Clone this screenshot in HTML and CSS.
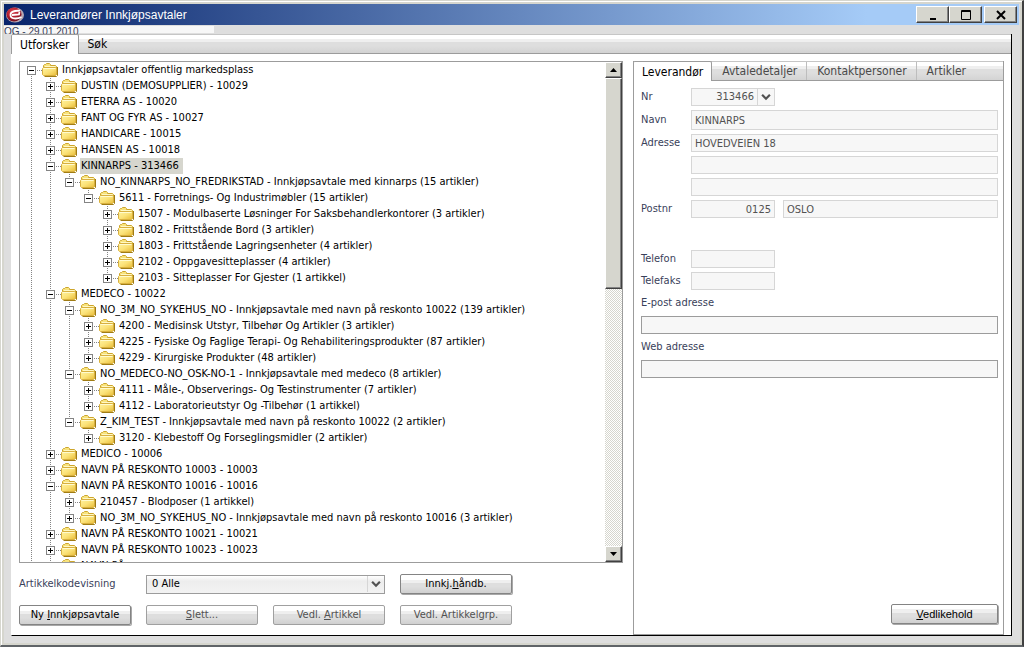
FILE: index.html
```
<!DOCTYPE html>
<html lang="no">
<head>
<meta charset="utf-8">
<title>Leverandører Innkjøpsavtaler</title>
<link rel="stylesheet" href="styles.css">
</head>
<body>
<svg class="defs" aria-hidden="true">
  <defs>
    <linearGradient id="gold" x1="0" y1="0" x2="1" y2="1">
      <stop offset="0" stop-color="#fff3a0"/><stop offset=".5" stop-color="#fbe278"/><stop offset="1" stop-color="#e8bc38"/>
    </linearGradient>
    <radialGradient id="ball" cx=".4" cy=".3" r=".7">
      <stop offset="0" stop-color="#d84450"/><stop offset=".6" stop-color="#b01c2c"/><stop offset="1" stop-color="#701020"/>
    </radialGradient>
    <symbol id="folder" viewBox="0 0 16 14">
      <path d="M1.5 11.5v-9l1-1h1l1-1h3l1 1v1h5l1 1v8z" fill="#f8e37c" stroke="#cda52c"/>
      <path d="M3 3.500h10.500" stroke="#fff8c4"/>
      <path d="M.5 5.500l1-1h12l1 1v6l-1 1h-12l-1-1z" fill="url(#gold)" stroke="#d8b040"/>
      <path d="M1.500 5.500h12" stroke="#fffbd0"/>
      <path d="M15.500 4v8.500l-1 1h-12" fill="none" stroke="#a07c14"/>
    </symbol>
    <symbol id="chevron" viewBox="0 0 9 7">
      <path d="M1 1.500l3.500 3.500l3.500-3.500" fill="none" stroke="currentColor" stroke-width="2"/>
    </symbol>
  </defs>
</svg>
<div class="window">
  <header class="titlebar">
    <svg class="logo" viewBox="0 0 18 16" aria-hidden="true">
      <ellipse cx="9" cy="8" rx="9" ry="7.500" fill="#b8a8b4"/>
      <ellipse cx="8" cy="7.500" rx="7.500" ry="7" fill="url(#ball)"/>
      <path d="M14 3.500l-5 .5c-3 .5-4.500 2-4.500 4s2 3.500 5 3.500c2 0 4-.5 6-1.500M6 8l7-.5.5-2.500" fill="none" stroke="#fff" stroke-width="1.800"/>
    </svg>
    <h1>Leverandører Innkjøpsavtaler</h1>
    <div class="caption-buttons">
      <button type="button" class="bevel" aria-label="Minimer"><svg viewBox="0 0 12 12"><path d="M3 10h6" stroke="#000" stroke-width="2"/></svg></button>
      <button type="button" class="bevel" aria-label="Maksimer"><svg viewBox="0 0 12 12"><path d="M1.500 1.500h9v9h-9zM1 2.500h10" fill="none" stroke="#000"/></svg></button>
      <button type="button" class="bevel close" aria-label="Lukk"><svg viewBox="0 0 12 12"><path d="M2 2l8 8M10 2l-8 8" stroke="#000" stroke-width="2"/></svg></button>
    </div>
  </header>
  <div class="status"><span>OG - 29.01.2010</span></div>
  <main class="panel">
    <nav class="tabs main-tabs">
      <button type="button" class="tab active">Utforsker</button>
      <button type="button" class="tab">Søk</button>
    </nav>
    <div class="columns">
      <section class="explorer">
        <div class="tree-box">
          <ul class="tree">
            <li class="root"><div class="row"><button type="button" class="toggle open" aria-label="Lukk gren"></button><svg class="folder"><use href="#folder"/></svg><span>Innkjøpsavtaler offentlig markedsplass</span></div>
              <ul>
                <li><div class="row"><button type="button" class="toggle" aria-label="Åpne gren"></button><svg class="folder"><use href="#folder"/></svg><span>DUSTIN (DEMOSUPPLIER) - 10029</span></div></li>
                <li><div class="row"><button type="button" class="toggle" aria-label="Åpne gren"></button><svg class="folder"><use href="#folder"/></svg><span>ETERRA AS - 10020</span></div></li>
                <li><div class="row"><button type="button" class="toggle" aria-label="Åpne gren"></button><svg class="folder"><use href="#folder"/></svg><span>FANT OG FYR AS - 10027</span></div></li>
                <li><div class="row"><button type="button" class="toggle" aria-label="Åpne gren"></button><svg class="folder"><use href="#folder"/></svg><span>HANDICARE - 10015</span></div></li>
                <li><div class="row"><button type="button" class="toggle" aria-label="Åpne gren"></button><svg class="folder"><use href="#folder"/></svg><span>HANSEN AS - 10018</span></div></li>
                <li><div class="row"><button type="button" class="toggle open" aria-label="Lukk gren"></button><svg class="folder"><use href="#folder"/></svg><span class="selected">KINNARPS - 313466</span></div>
                  <ul>
                    <li><div class="row"><button type="button" class="toggle open" aria-label="Lukk gren"></button><svg class="folder"><use href="#folder"/></svg><span>NO_KINNARPS_NO_FREDRIKSTAD - Innkjøpsavtale med kinnarps (15 artikler)</span></div>
                      <ul>
                        <li><div class="row"><button type="button" class="toggle open" aria-label="Lukk gren"></button><svg class="folder"><use href="#folder"/></svg><span>5611 - Forretnings- Og Industrimøbler (15 artikler)</span></div>
                          <ul>
                            <li><div class="row"><button type="button" class="toggle" aria-label="Åpne gren"></button><svg class="folder"><use href="#folder"/></svg><span>1507 - Modulbaserte Løsninger For Saksbehandlerkontorer (3 artikler)</span></div></li>
                            <li><div class="row"><button type="button" class="toggle" aria-label="Åpne gren"></button><svg class="folder"><use href="#folder"/></svg><span>1802 - Frittstående Bord (3 artikler)</span></div></li>
                            <li><div class="row"><button type="button" class="toggle" aria-label="Åpne gren"></button><svg class="folder"><use href="#folder"/></svg><span>1803 - Frittstående Lagringsenheter (4 artikler)</span></div></li>
                            <li><div class="row"><button type="button" class="toggle" aria-label="Åpne gren"></button><svg class="folder"><use href="#folder"/></svg><span>2102 - Oppgavesitteplasser (4 artikler)</span></div></li>
                            <li><div class="row"><button type="button" class="toggle" aria-label="Åpne gren"></button><svg class="folder"><use href="#folder"/></svg><span>2103 - Sitteplasser For Gjester (1 artikkel)</span></div></li>
                          </ul>
                        </li>
                      </ul>
                    </li>
                  </ul>
                </li>
                <li><div class="row"><button type="button" class="toggle open" aria-label="Lukk gren"></button><svg class="folder"><use href="#folder"/></svg><span>MEDECO - 10022</span></div>
                  <ul>
                    <li><div class="row"><button type="button" class="toggle open" aria-label="Lukk gren"></button><svg class="folder"><use href="#folder"/></svg><span>NO_3M_NO_SYKEHUS_NO - Innkjøpsavtale med navn på reskonto 10022 (139 artikler)</span></div>
                      <ul>
                        <li><div class="row"><button type="button" class="toggle" aria-label="Åpne gren"></button><svg class="folder"><use href="#folder"/></svg><span>4200 - Medisinsk Utstyr, Tilbehør Og Artikler (3 artikler)</span></div></li>
                        <li><div class="row"><button type="button" class="toggle" aria-label="Åpne gren"></button><svg class="folder"><use href="#folder"/></svg><span>4225 - Fysiske Og Faglige Terapi- Og Rehabiliteringsprodukter (87 artikler)</span></div></li>
                        <li><div class="row"><button type="button" class="toggle" aria-label="Åpne gren"></button><svg class="folder"><use href="#folder"/></svg><span>4229 - Kirurgiske Produkter (48 artikler)</span></div></li>
                      </ul>
                    </li>
                    <li><div class="row"><button type="button" class="toggle open" aria-label="Lukk gren"></button><svg class="folder"><use href="#folder"/></svg><span>NO_MEDECO-NO_OSK-NO-1 - Innkjøpsavtale med medeco (8 artikler)</span></div>
                      <ul>
                        <li><div class="row"><button type="button" class="toggle" aria-label="Åpne gren"></button><svg class="folder"><use href="#folder"/></svg><span>4111 - Måle-, Observerings- Og Testinstrumenter (7 artikler)</span></div></li>
                        <li><div class="row"><button type="button" class="toggle" aria-label="Åpne gren"></button><svg class="folder"><use href="#folder"/></svg><span>4112 - Laboratorieutstyr Og -Tilbehør (1 artikkel)</span></div></li>
                      </ul>
                    </li>
                    <li><div class="row"><button type="button" class="toggle open" aria-label="Lukk gren"></button><svg class="folder"><use href="#folder"/></svg><span>Z_KIM_TEST - Innkjøpsavtale med navn på reskonto 10022 (2 artikler)</span></div>
                      <ul>
                        <li><div class="row"><button type="button" class="toggle" aria-label="Åpne gren"></button><svg class="folder"><use href="#folder"/></svg><span>3120 - Klebestoff Og Forseglingsmidler (2 artikler)</span></div></li>
                      </ul>
                    </li>
                  </ul>
                </li>
                <li><div class="row"><button type="button" class="toggle" aria-label="Åpne gren"></button><svg class="folder"><use href="#folder"/></svg><span>MEDICO - 10006</span></div></li>
                <li><div class="row"><button type="button" class="toggle" aria-label="Åpne gren"></button><svg class="folder"><use href="#folder"/></svg><span>NAVN PÅ RESKONTO 10003 - 10003</span></div></li>
                <li><div class="row"><button type="button" class="toggle open" aria-label="Lukk gren"></button><svg class="folder"><use href="#folder"/></svg><span>NAVN PÅ RESKONTO 10016 - 10016</span></div>
                  <ul>
                    <li><div class="row"><button type="button" class="toggle" aria-label="Åpne gren"></button><svg class="folder"><use href="#folder"/></svg><span>210457 - Blodposer (1 artikkel)</span></div></li>
                    <li><div class="row"><button type="button" class="toggle" aria-label="Åpne gren"></button><svg class="folder"><use href="#folder"/></svg><span>NO_3M_NO_SYKEHUS_NO - Innkjøpsavtale med navn på reskonto 10016 (3 artikler)</span></div></li>
                  </ul>
                </li>
                <li><div class="row"><button type="button" class="toggle" aria-label="Åpne gren"></button><svg class="folder"><use href="#folder"/></svg><span>NAVN PÅ RESKONTO 10021 - 10021</span></div></li>
                <li><div class="row"><button type="button" class="toggle" aria-label="Åpne gren"></button><svg class="folder"><use href="#folder"/></svg><span>NAVN PÅ RESKONTO 10023 - 10023</span></div></li>
                <li><div class="row"><button type="button" class="toggle" aria-label="Åpne gren"></button><svg class="folder"><use href="#folder"/></svg><span>NAVN PÅ</span></div></li>
              </ul>
            </li>
          </ul>
          <div class="scrollbar">
            <button type="button" class="bevel" aria-label="Rull opp"><svg viewBox="0 0 7 4"><path d="M0 4l3.500-4L7 4z"/></svg></button>
            <div class="track"><div class="thumb bevel"></div></div>
            <button type="button" class="bevel" aria-label="Rull ned"><svg viewBox="0 0 7 4"><path d="M0 0l3.500 4L7 0z"/></svg></button>
          </div>
        </div>
        <div class="actions">
          <label for="code">Artikkelkodevisning</label>
          <div class="combo wide">
            <select id="code"><option>0 Alle</option></select>
            <svg class="arrow" aria-hidden="true"><use href="#chevron"/></svg>
          </div>
          <button type="button" class="btn raised">Innkj.<u>h</u>åndb.</button>
          <button type="button" class="btn">Ny <u>I</u>nnkjøpsavtale</button>
          <button type="button" class="btn" disabled><u>S</u>lett...</button>
          <button type="button" class="btn" disabled>Vedl. <u>A</u>rtikkel</button>
          <button type="button" class="btn" disabled>Vedl. Artikkelgrp.</button>
        </div>
      </section>
      <section class="details">
        <nav class="tabs detail-tabs">
          <button type="button" class="tab active">Leverandør</button>
          <button type="button" class="tab">Avtaledetaljer</button>
          <button type="button" class="tab">Kontaktpersoner</button>
          <button type="button" class="tab">Artikler</button>
        </nav>
        <form class="form">
          <div class="fields">
            <label for="nr">Nr</label>
            <div class="combo small">
              <select id="nr"><option>313466</option></select>
              <svg class="arrow" aria-hidden="true"><use href="#chevron"/></svg>
            </div>
            <label for="navn">Navn</label>
            <input id="navn" class="full tall" value="KINNARPS" readonly>
            <label for="adr1">Adresse</label>
            <input id="adr1" class="full" value="HOVEDVEIEN 18" readonly>
            <input class="full" aria-label="Adresse 2" readonly>
            <input class="full" aria-label="Adresse 3" readonly>
            <label for="post">Postnr</label>
            <input id="post" class="number" value="0125" readonly>
            <input value="OSLO" aria-label="Poststed" readonly>
          </div>
          <div class="fields phones">
            <label for="tel">Telefon</label>
            <input id="tel" readonly>
            <label for="fax">Telefaks</label>
            <input id="fax" readonly>
          </div>
          <label class="stacked">E-post adresse<input readonly></label>
          <label class="stacked">Web adresse<input readonly></label>
          <button type="button" class="btn maintain"><u>V</u>edlikehold</button>
        </form>
      </section>
    </div>
  </main>
</div>
</body>
</html>
```
FILE: styles.css
```
* { box-sizing: border-box; }

body {
  margin: 0;
  font: 11px/16px "DejaVu Sans Condensed", "Noto Sans", sans-serif;
  color: #000;
}

button, input, select { font: inherit; color: inherit; margin: 0; padding: 0; border-radius: 0; }
button { cursor: default; }
ul { list-style: none; margin: 0; padding: 0; }
.defs { position: absolute; width: 0; height: 0; }

.window {
  display: flex;
  flex-direction: column;
  height: 100vh;
  padding: 2px;
  border: 1px solid #d6d6ce;
  border-right: 2px solid #404040;
  border-bottom: 2px solid #606468;
  background: #dedede;
  box-shadow: inset 1px 1px #fff, inset 3px 3px #d6d6ce, inset -2px -2px #d6d6ce;
}

.titlebar {
  display: flex;
  align-items: center;
  flex: none;
  height: 21px;
  margin: 1px 1px 0;
  padding: 0 2px;
  background: linear-gradient(90deg, #08246b, #a5cbf7 85%);
  color: #fff;
}
.logo { width: 18px; height: 16px; }
.titlebar h1 {
  flex: 1;
  margin: 0 0 0 6px;
  font: 12px/16px "Liberation Sans", sans-serif;
}
.caption-buttons { display: flex; }
.caption-buttons button { width: 33px; height: 17px; }
.caption-buttons .close { margin-left: 2px; }
.caption-buttons svg { width: 12px; height: 12px; }

.bevel {
  display: flex;
  align-items: center;
  justify-content: center;
  background: #d6d6ce;
  border: 1px solid;
  border-color: #fff #404040 #404040 #fff;
  box-shadow: inset -1px -1px #848484;
}

.status {
  flex: none;
  height: 9px;
  padding: 1px 0 0 1px;
  overflow: hidden;
  color: #39415a;
  font: 10px/12px "Liberation Sans", sans-serif;
  background: linear-gradient(#f7f7f7, #f7f7f7) 1px 1px / 210px 7px no-repeat;
}

.panel {
  display: flex;
  flex-direction: column;
  flex: 1;
  min-height: 0;
  margin: 0 8px 7px;
  background: #fff;
  border-left: 1px solid #fff;
  border-right: 1px solid #000;
  border-bottom: 1px solid #000;
}

.tabs {
  display: flex;
  flex: none;
  height: 20px;
  border: solid #9c9c9c;
  border-width: 1px 0;
  border-top-color: #c6c6c6;
  background: linear-gradient(#fff 0 20%, #efefef 20% 40%, #dedede 40% 60%, #d3d3d3);
}
.tab { border: 0; background: none; font-size: 12px; line-height: 16px; }
.tab.active {
  margin: -1px 0;
  border: 1px solid #9c9c9c;
  border-bottom: 0;
  border-radius: 2px 2px 0 0;
  background: #fff;
}
.main-tabs .tab { padding: 0 9px; }
.main-tabs .active { margin-left: -1px; padding: 0 8px; }

.columns {
  display: grid;
  grid-template-columns: 604fr 371fr;
  gap: 10px;
  flex: 1;
  min-height: 0;
  padding: 7px 7px 0;
}

.explorer { display: flex; flex-direction: column; min-width: 0; min-height: 0; }
.tree-box {
  display: flex;
  flex: 1;
  min-height: 0;
  overflow: hidden;
  border: 1px solid #9c9c9c;
}
.tree { flex: 1; min-width: 0; padding-left: 7px; overflow: hidden; }
.tree ul { margin-left: 19px; }
.tree li {
  background: repeating-linear-gradient(#848484 0 1px, #fff 1px 2px) 4px 0 / 1px 100% no-repeat;
}
.tree li:last-child { background-size: 1px 8px; }
.tree li.root { background-position: 4px 8px; background-size: 1px 100%; }
.tree > li > ul > li:last-child { background-size: 1px 100%; }
.row { display: flex; align-items: center; height: 16px; white-space: nowrap; }
.row span { margin-left: 3px; padding: 0 4px 0 1px; }
.row .selected { background: #d6d6ce; }
.toggle {
  flex: none;
  width: 9px;
  height: 9px;
  border: 1px solid #848484;
  background:
    linear-gradient(#000, #000) center / 5px 1px no-repeat,
    linear-gradient(#000, #000) center / 1px 5px no-repeat,
    #fff;
}
.toggle.open { background: linear-gradient(#000, #000) center / 5px 1px no-repeat, #fff; }
.folder {
  flex: none;
  box-sizing: content-box;
  width: 16px;
  height: 14px;
  padding-left: 6px;
  background: repeating-linear-gradient(90deg, #fff 0 1px, #848484 1px 2px) 0 7px / 6px 1px no-repeat;
}

.scrollbar { display: flex; flex-direction: column; flex: none; width: 17px; }
.scrollbar button { flex: none; height: 16px; }
.scrollbar svg { width: 7px; height: 4px; }
.track {
  flex: 1;
  background: repeating-conic-gradient(#d6d6ce 0 25%, #fff 0 50%) 0 0 / 2px 2px;
}
.thumb { height: 45%; }

.actions {
  display: grid;
  grid-template-columns: repeat(4, 112px);
  gap: 11px 15px;
  align-items: center;
  padding: 11px 0 10px;
}
label { color: #39415a; }
.wide { grid-column: span 2; }

.btn {
  height: 20px;
  border: 1px solid #848484;
  border-radius: 2px;
  background: linear-gradient(#fff 0 25%, #efefef 25% 45%, #dedede 45% 65%, #d0d0d0);
  line-height: 16px;
  box-shadow: 1px 1px #a8a8a8;
}
.btn:disabled { color: #525252; border-color: #a0a0a0; box-shadow: none; }

.combo { display: grid; grid-template-columns: 1fr 17px; border: 1px solid #9c9c9c; background: #f7f7f7; }
.combo select {
  grid-area: 1 / 1 / 2 / 3;
  width: 100%;
  height: 17px;
  padding: 0 5px;
  border: 0;
  appearance: none;
  background: linear-gradient(#fff, #ededed 30%, #f3f3f3);
}
.arrow {
  grid-area: 1 / 2;
  box-sizing: border-box;
  width: 17px;
  height: 16px;
  padding: 4px 3px;
  border-left: 1px solid #d6d6d6;
  color: #525252;
  pointer-events: none;
}

.details { display: flex; flex-direction: column; min-width: 0; border: 1px solid #9c9c9c; border-top: 0; }
.detail-tabs .tab { color: #4a4a4a; padding: 0 9px 0 10px; border-right: 1px solid #bdbdbd; }
.detail-tabs .tab:last-child { border-right: 0; }
.detail-tabs .tab.active { margin-left: -1px; padding: 0 8px; color: #000; border-color: #9c9c9c; }

.form { display: flex; flex-direction: column; flex: 1; padding: 7px 5px 10px 7px; }
.fields { display: grid; grid-template-columns: 42px 84px 1fr; gap: 4px 8px; align-items: center; }
.fields label { grid-column: 1; line-height: 18px; }
.form input {
  width: 100%;
  height: 18px;
  padding: 0 3px;
  border: 1px solid #d6d6d6;
  background: #f7f7f7;
  color: #525252;
}
.form .full { grid-column: 2 / 4; }
.form .tall { height: 20px; }
.form .number { text-align: right; }
.form .small { border-color: #d6d6d6; color: #525252; }
.small select { height: 16px; padding-right: 20px; text-align: right; text-align-last: right; background: #f7f7f7; }
.phones { margin: 32px 0 4px; }
.stacked { display: block; line-height: 18px; margin-bottom: 4px; }
.stacked input { display: block; margin-top: 4px; }
.form .stacked input { border-color: #9c9c9c; }
.maintain {
  align-self: flex-end;
  width: 107px;
  margin-top: auto;
  font-family: "Liberation Sans", sans-serif;
}
```
